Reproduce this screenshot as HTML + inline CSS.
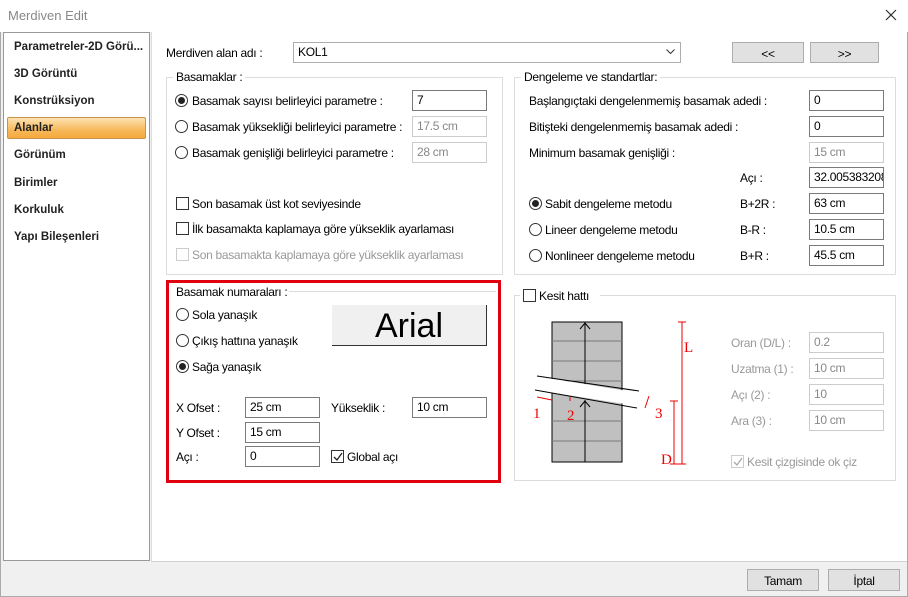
<!DOCTYPE html>
<html><head><meta charset="utf-8"><style>
*{box-sizing:border-box;margin:0;padding:0}
body{width:908px;height:597px;background:#f0f0f0;font-family:"Liberation Sans",sans-serif;font-size:12px;color:#000;position:relative;overflow:hidden;letter-spacing:-0.3px}
.a{position:absolute;white-space:nowrap}
.win{position:absolute;left:0;top:0;width:908px;height:597px;border:1px solid #aaa}
.title{position:absolute;left:0;top:0;width:908px;height:32px;background:#fff}
.inp{position:absolute;background:#fff;border:1px solid #7a7a7a;height:21px;padding:2px 0 0 4px;font-size:12px}
.dis{border-color:#ccc;color:#888}
.grp{position:absolute;border:1px solid #dcdcdc}
.gl{position:absolute;background:#fff;padding:0 3px;top:-8px;left:6px}
.rad{position:absolute;width:13px;height:13px;border:1px solid #333;border-radius:50%;background:#fff}
.rad.on::after{content:"";position:absolute;left:2px;top:2px;width:7px;height:7px;border-radius:50%;background:#222}
.chk{position:absolute;width:13px;height:13px;border:1px solid #333;background:#fff}
.btn{position:absolute;background:#e1e1e1;border:1px solid #adadad;text-align:center;padding-top:4px}
.li{position:absolute;left:14px;font-weight:bold;font-size:11.5px;color:#222;letter-spacing:0}
</style></head><body>
<div class="win"></div>
<div class="title"></div>
<div class="a" style="left:151px;top:32px;width:756px;height:530px;background:#fff;border-left:1px solid #ddd;border-bottom:1px solid #d0d0d0"></div>
<div class="a" style="left:8px;top:8px;font-size:13px;color:#888;letter-spacing:0">Merdiven Edit</div>
<svg class="a" style="left:885px;top:9px" width="12" height="12"><path d="M1 1L11 11M11 1L1 11" stroke="#333" stroke-width="1.2"/></svg>
<div class="a" style="left:3px;top:32px;width:147px;height:529px;background:#fff;border:1px solid #999"></div>
<div class="a" style="left:7px;top:117px;width:139px;height:22px;background:linear-gradient(#fde3b3,#f7b85a 60%,#f5a93e);border:1px solid #c9924a;border-radius:2px"></div>
<div class="li" style="top:41px">Parametreler-2D Görü...</div>
<div class="li" style="top:68px">3D Görüntü</div>
<div class="li" style="top:95px">Konstrüksiyon</div>
<div class="li" style="top:122px">Alanlar</div>
<div class="li" style="top:149px">Görünüm</div>
<div class="li" style="top:177px">Birimler</div>
<div class="li" style="top:204px">Korkuluk</div>
<div class="li" style="top:231px">Yapı Bileşenleri</div>

<div class="a" style="left:166px;top:46px">Merdiven alan adı :</div>
<div class="inp" style="left:293px;top:42px;width:388px;border-color:#adadad;background:#fff">KOL1</div>
<svg class="a" style="left:666px;top:49px" width="9" height="6"><path d="M0.5 0.5L4.5 4.5L8.5 0.5" stroke="#333" fill="none"/></svg>
<div class="btn" style="left:732px;top:42px;width:72px;height:21px">&lt;&lt;</div>
<div class="btn" style="left:810px;top:42px;width:69px;height:21px">&gt;&gt;</div>

<div class="grp" style="left:166px;top:77px;width:337px;height:198px"><div class="gl">Basamaklar :</div></div>
<div class="rad on" style="left:175px;top:94px"></div><div class="a" style="left:192px;top:94px">Basamak sayısı belirleyici parametre :</div>
<div class="inp" style="left:412px;top:90px;width:75px">7</div>
<div class="rad" style="left:175px;top:120px"></div><div class="a" style="left:192px;top:120px">Basamak yüksekliği belirleyici parametre :</div>
<div class="inp dis" style="left:412px;top:116px;width:75px">17.5 cm</div>
<div class="rad" style="left:175px;top:146px"></div><div class="a" style="left:192px;top:146px">Basamak genişliği belirleyici parametre :</div>
<div class="inp dis" style="left:412px;top:142px;width:75px">28 cm</div>
<div class="chk" style="left:176px;top:197px"></div><div class="a" style="left:192px;top:197px">Son basamak üst kot seviyesinde</div>
<div class="chk" style="left:176px;top:222px"></div><div class="a" style="left:192px;top:222px">İlk basamakta kaplamaya göre yükseklik ayarlaması</div>
<div class="chk" style="left:176px;top:248px;border-color:#ccc"></div><div class="a" style="left:192px;top:248px;color:#999">Son basamakta kaplamaya göre yükseklik ayarlaması</div>

<div class="a" style="left:166px;top:280px;width:335px;height:203px;border:3px solid #e0000f"></div>
<div class="a" style="left:178px;top:291px;width:318px;border-top:1px solid #dcdcdc"></div>
<div class="a" style="left:174px;top:285px;background:#fff;padding:0 2px">Basamak numaraları :</div>
<div class="rad" style="left:176px;top:308px"></div><div class="a" style="left:192px;top:308px">Sola yanaşık</div>
<div class="rad" style="left:176px;top:334px"></div><div class="a" style="left:192px;top:334px">Çıkış hattına yanaşık</div>
<div class="rad on" style="left:176px;top:360px"></div><div class="a" style="left:192px;top:360px">Sağa yanaşık</div>
<div class="a" style="left:332px;top:305px;width:155px;height:41px;background:#f0f0f0;border-right:1px solid #333;border-bottom:1px solid #333;text-align:center;font-size:34px;line-height:42px;letter-spacing:0">Arial</div>
<div class="a" style="left:176px;top:401px">X Ofset :</div>
<div class="inp" style="left:245px;top:397px;width:75px">25 cm</div>
<div class="a" style="left:331px;top:401px">Yükseklik :</div>
<div class="inp" style="left:412px;top:397px;width:75px">10 cm</div>
<div class="a" style="left:176px;top:426px">Y Ofset :</div>
<div class="inp" style="left:245px;top:422px;width:75px">15 cm</div>
<div class="a" style="left:176px;top:450px">Açı :</div>
<div class="inp" style="left:245px;top:446px;width:75px">0</div>
<div class="chk" style="left:331px;top:450px"></div>
<svg class="a" style="left:333px;top:452px" width="10" height="10"><path d="M1 5L4 8L9 1" stroke="#222" fill="none" stroke-width="1.3"/></svg>
<div class="a" style="left:347px;top:450px">Global açı</div>

<div class="grp" style="left:514px;top:77px;width:382px;height:198px"><div class="gl">Dengeleme ve standartlar:</div></div>
<div class="a" style="left:529px;top:94px">Başlangıçtaki dengelenmemiş basamak adedi :</div>
<div class="inp" style="left:809px;top:90px;width:75px">0</div>
<div class="a" style="left:529px;top:120px">Bitişteki dengelenmemiş basamak adedi :</div>
<div class="inp" style="left:809px;top:116px;width:75px">0</div>
<div class="a" style="left:529px;top:146px">Minimum basamak genişliği :</div>
<div class="inp dis" style="left:809px;top:142px;width:75px">15 cm</div>
<div class="a" style="left:740px;top:171px">Açı :</div>
<div class="inp" style="left:809px;top:167px;width:75px;overflow:hidden">32.005383208</div>
<div class="rad on" style="left:529px;top:197px"></div><div class="a" style="left:545px;top:197px">Sabit dengeleme metodu</div>
<div class="a" style="left:740px;top:197px">B+2R :</div><div class="inp" style="left:809px;top:193px;width:75px">63 cm</div>
<div class="rad" style="left:529px;top:223px"></div><div class="a" style="left:545px;top:223px">Lineer dengeleme metodu</div>
<div class="a" style="left:740px;top:223px">B-R :</div><div class="inp" style="left:809px;top:219px;width:75px">10.5 cm</div>
<div class="rad" style="left:529px;top:249px"></div><div class="a" style="left:545px;top:249px">Nonlineer dengeleme metodu</div>
<div class="a" style="left:740px;top:249px">B+R :</div><div class="inp" style="left:809px;top:245px;width:75px">45.5 cm</div>

<div class="grp" style="left:514px;top:295px;width:382px;height:186px"></div>
<div class="a" style="left:520px;top:288px;background:#fff;height:14px;width:80px"></div>
<div class="chk" style="left:523px;top:289px"></div><div class="a" style="left:539px;top:289px">Kesit hattı</div>
<svg class="a" style="left:515px;top:290px" width="200" height="190">
<rect x="37" y="32" width="70" height="140" fill="#c0c0c0" stroke="#000"/>
<path d="M37 51H107M37 71H107M37 91H107M37 131H107M37 151H107" stroke="#777"/>
<polygon points="20,86 130,104 130,117 20,100" fill="#fff"/>
<path d="M22 86L124 101M20 100L122 118" stroke="#000"/>
<path d="M70 32V94M70 110V172M65 39L70 33L75 39M65 117L70 111L75 117" stroke="#000" fill="none"/>
<path d="M22 107L37 110M55 107V111M134 106L130 118M167 32V174M163 32H171M163 174H171M159 111V174M155 111H163M155 174H163" stroke="#e00" fill="none"/>
<text x="18" y="128" fill="#e00" font-family="Liberation Serif" font-size="15">1</text>
<text x="52" y="130" fill="#e00" font-family="Liberation Serif" font-size="15">2</text>
<text x="140" y="128" fill="#e00" font-family="Liberation Serif" font-size="15">3</text>
<text x="169" y="62" fill="#e00" font-family="Liberation Serif" font-size="15">L</text>
<text x="146" y="174" fill="#e00" font-family="Liberation Serif" font-size="15">D</text>
</svg>
<div class="a" style="left:731px;top:336px;color:#999">Oran (D/L) :</div><div class="inp dis" style="left:809px;top:332px;width:75px">0.2</div>
<div class="a" style="left:731px;top:362px;color:#999">Uzatma (1) :</div><div class="inp dis" style="left:809px;top:358px;width:75px">10 cm</div>
<div class="a" style="left:731px;top:388px;color:#999">Açı (2) :</div><div class="inp dis" style="left:809px;top:384px;width:75px">10</div>
<div class="a" style="left:731px;top:414px;color:#999">Ara (3) :</div><div class="inp dis" style="left:809px;top:410px;width:75px">10 cm</div>
<div class="chk" style="left:731px;top:455px;border-color:#ccc"></div>
<svg class="a" style="left:733px;top:457px" width="10" height="10"><path d="M1 5L4 8L9 1" stroke="#aaa" fill="none" stroke-width="1.3"/></svg>
<div class="a" style="left:747px;top:455px;color:#999">Kesit çizgisinde ok çiz</div>

<div class="btn" style="left:747px;top:569px;width:72px;height:22px">Tamam</div>
<div class="btn" style="left:828px;top:569px;width:72px;height:22px">İptal</div>
</body></html>
